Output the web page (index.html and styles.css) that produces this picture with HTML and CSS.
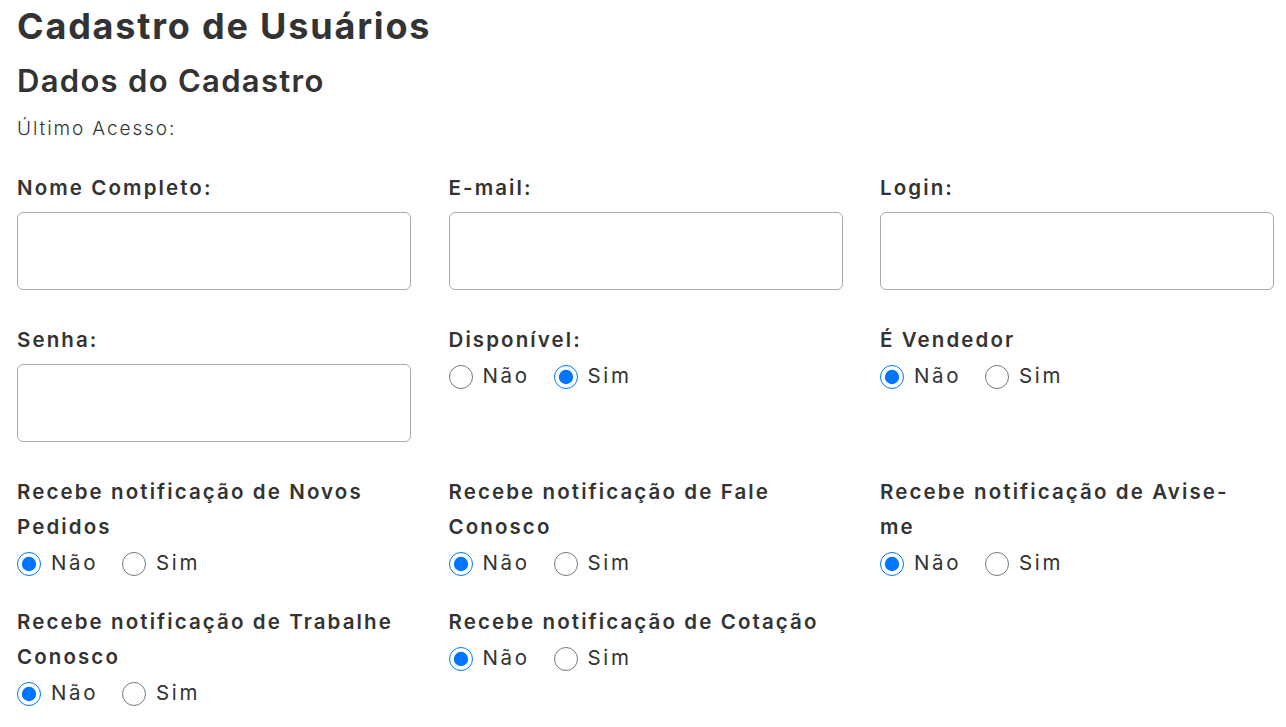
FILE: index.html
```html
<!DOCTYPE html>
<html lang="pt-BR">
<head>
<meta charset="utf-8">
<title>Cadastro de Usuários</title>
<link rel="stylesheet" href="styles.css">
</head>
<body>
<div class="page">
  <h1 class="title">Cadastro de Usuários</h1>
  <h2 class="subtitle">Dados do Cadastro</h2>
  <p class="last-access">Último Acesso:</p>
  <form class="grid">
    <div class="field">
      <label class="label" for="nome">Nome Completo:</label>
      <input class="input" id="nome" type="text">
    </div>
    <div class="field">
      <label class="label" for="email">E-mail:</label>
      <input class="input" id="email" type="text">
    </div>
    <div class="field">
      <label class="label" for="login">Login:</label>
      <input class="input" id="login" type="text">
    </div>

    <div class="field">
      <label class="label" for="senha">Senha:</label>
      <input class="input" id="senha" type="password">
    </div>
    <div class="field">
      <div class="label">Disponível:</div>
      <div class="radios">
        <label class="opt"><input type="radio" name="disp"> Não</label>
        <label class="opt"><input type="radio" name="disp" checked> Sim</label>
      </div>
    </div>
    <div class="field">
      <div class="label">É Vendedor</div>
      <div class="radios">
        <label class="opt"><input type="radio" name="vend" checked> Não</label>
        <label class="opt"><input type="radio" name="vend"> Sim</label>
      </div>
    </div>

    <div class="field">
      <div class="label">Recebe notificação de Novos Pedidos</div>
      <div class="radios">
        <label class="opt"><input type="radio" name="np" checked> Não</label>
        <label class="opt"><input type="radio" name="np"> Sim</label>
      </div>
    </div>
    <div class="field">
      <div class="label">Recebe notificação de Fale Conosco</div>
      <div class="radios">
        <label class="opt"><input type="radio" name="fc" checked> Não</label>
        <label class="opt"><input type="radio" name="fc"> Sim</label>
      </div>
    </div>
    <div class="field">
      <div class="label">Recebe notificação de Avise-<br>me</div>
      <div class="radios">
        <label class="opt"><input type="radio" name="av" checked> Não</label>
        <label class="opt"><input type="radio" name="av"> Sim</label>
      </div>
    </div>

    <div class="field">
      <div class="label">Recebe notificação de Trabalhe Conosco</div>
      <div class="radios">
        <label class="opt"><input type="radio" name="tc" checked> Não</label>
        <label class="opt"><input type="radio" name="tc"> Sim</label>
      </div>
    </div>
    <div class="field">
      <div class="label">Recebe notificação de Cotação</div>
      <div class="radios">
        <label class="opt"><input type="radio" name="ct" checked> Não</label>
        <label class="opt"><input type="radio" name="ct"> Sim</label>
      </div>
    </div>
  </form>
</div>
</body>
</html>
```
FILE: styles.css
```css
html, body {
  margin: 0;
  padding: 0;
  background: #ffffff;
}

body {
  font-family: Inter, "Open Sans", "Liberation Sans", sans-serif;
  color: #333333;
}

.page {
  padding: 0 12px 0 17px;
}

.title {
  margin: 0;
  padding-top: 4px;
  font-size: 36px;
  line-height: 44px;
  font-weight: 700;
  letter-spacing: 1.8px;
}

.subtitle {
  margin: 13px 0 0;
  font-size: 31px;
  line-height: 40px;
  font-weight: 600;
  letter-spacing: 1.3px;
}

.last-access {
  margin: 13px 0 0;
  font-size: 19px;
  line-height: 30px;
  font-weight: 300;
  letter-spacing: 1.9px;
}

.grid {
  margin-top: 26px;
  display: grid;
  grid-template-columns: repeat(3, 1fr);
  column-gap: 37.5px;
  row-gap: 24px;
  align-items: start;
}

.field {
  display: flex;
  flex-direction: column;
}

.label {
  font-size: 20.5px;
  line-height: 35px;
  font-weight: 600;
  letter-spacing: 2.1px;
}

.input {
  margin: 7px 0 8px;
  height: 78px;
  box-sizing: border-box;
  width: 100%;
  border: 1px solid #ababab;
  border-radius: 6px;
  background: #fff;
}

.radios {
  display: flex;
  gap: 24px;
  padding-top: 1px;
  font-size: 20.5px;
  line-height: 35px;
  letter-spacing: 2.6px;
}

.opt {
  display: inline-flex;
  align-items: center;
  gap: 10px;
}

.opt input {
  margin: 3px 0 0 0;
  width: 24px;
  height: 24px;
}
```
